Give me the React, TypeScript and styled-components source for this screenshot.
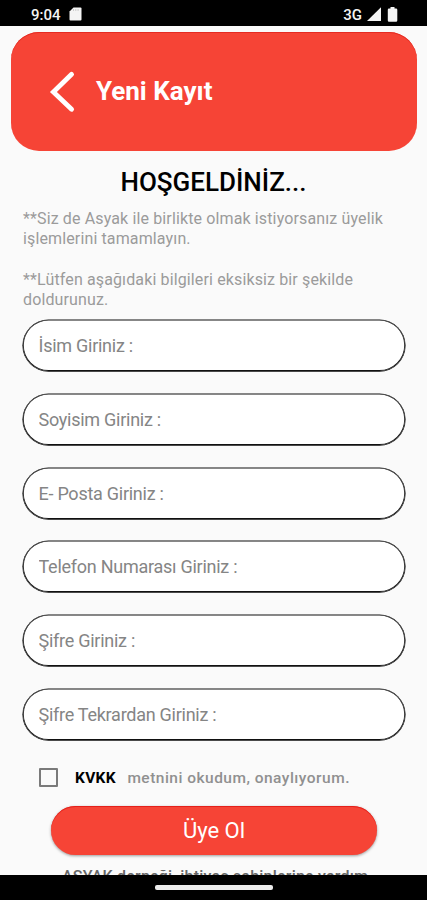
import React from "react";
import styled, { createGlobalStyle } from "styled-components";

const GlobalStyle = createGlobalStyle`
  *, *::before, *::after { box-sizing: border-box; }
  body { margin: 0; background: #fafafa; }
  #root { font-family: Roboto, "Noto Sans", sans-serif; }
`;

const Screen = styled.div`
  display: flex;
  flex-direction: column;
  width: 427px;
  height: 900px;
  overflow: hidden;
  background: #fafafa;
`;

const StatusBar = styled.div`
  display: flex;
  flex: none;
  align-items: center;
  height: 26px;
  padding: 3px 29px 0 31px;
  background: #000;
  color: #f4f4f4;
  font-size: 15px;
  font-weight: 500;
  line-height: 20px;
`;

const Clock = styled.span`
  width: 38px;
`;

const Network = styled.span`
  margin-left: auto;
  margin-right: 5px;
  font-size: 15px;
  line-height: 18px;
`;

const StatusIcon = styled.svg`
  display: block;
  flex: none;
`;

const Content = styled.main`
  display: flex;
  flex: 1;
  flex-direction: column;
  min-height: 0;
  overflow: hidden;
`;

const Header = styled.header`
  display: flex;
  flex: none;
  align-items: center;
  height: 119px;
  margin: 6px 10px 0 11.4px;
  padding-left: 37.6px;
  border-radius: 28px;
  background: #f64436;
  box-shadow: inset 0 1px 0 #e52b22;
  color: #fff;
`;

const BackButton = styled.button`
  display: block;
  padding: 0;
  border: 0;
  background: none;
  color: inherit;
`;

const Title = styled.h1`
  margin: 0 0 2px 19px;
  font-size: 26px;
  font-weight: 700;
  line-height: 30px;
`;

const Welcome = styled.h2`
  flex: none;
  margin: 16px 0 0;
  color: #000;
  font-size: 26px;
  font-weight: 500;
  line-height: 30px;
  text-align: center;
`;

const Notes = styled.div`
  display: flex;
  flex: none;
  flex-direction: column;
  gap: 22px;
  height: 111px;
  margin: 12px 23px 0;
`;

const Note = styled.p`
  margin: 0;
  color: #9b9b9b;
  font-size: 16px;
  line-height: 19.5px;
  letter-spacing: 0.13px;
`;

const Form = styled.form`
  display: flex;
  flex: none;
  flex-direction: column;
`;

const Fields = styled.div`
  display: flex;
  flex-direction: column;
  gap: 22.8px;
  padding: 0 22px 0 23px;
`;

const Field = styled.input`
  width: 100%;
  height: 51px;
  padding: 0 15.5px;
  border: 0;
  border-radius: 26px;
  outline: 0;
  background: #fff;
  box-shadow: 0 0.1px 0 0.6px #111, inset 0 -0.2px 0 0.75px #111;
  font: 400 18px/22px Roboto, "Noto Sans", sans-serif;
  letter-spacing: -0.26px;

  &::placeholder {
    color: #858585;
    opacity: 1;
  }
`;

const Consent = styled.label`
  display: flex;
  align-items: center;
  height: 24px;
  margin: 26px 0 0 39px;
  color: #909090;
  font-size: 15.5px;
  font-weight: 500;
  letter-spacing: 0.48px;
`;

const Checkbox = styled.input`
  appearance: none;
  width: 19px;
  height: 19px;
  margin: 0 17px 0 0;
  border: 2px solid #7a7a7a;
  border-radius: 1px;
  background: #fafafa;
`;

const ConsentLink = styled.strong`
  margin-right: 11.5px;
  color: #000;
  font-size: 15.5px;
  font-weight: 700;
  letter-spacing: 0.3px;
`;

const Submit = styled.button`
  height: 49px;
  margin: 16px 50px 0 51px;
  padding: 2px 0 0;
  border: 0;
  border-radius: 25px;
  background: #f64436;
  box-shadow: inset 0 1px 0 #e4201b, 0 1px 3px rgba(0, 0, 0, 0.38);
  color: #fff;
  font: 400 22px/26px Roboto, "Noto Sans", sans-serif;
`;

const Footnote = styled.p`
  flex: none;
  margin: 12px 0 0 62px;
  color: #666;
  font-size: 16px;
  font-weight: 500;
  line-height: 20px;
  letter-spacing: 0.2px;
  white-space: nowrap;
`;

const NavigationBar = styled.div`
  display: flex;
  flex: none;
  justify-content: center;
  height: 25px;
  padding-top: 10px;
  background: #000;
`;

const HomeHandle = styled.div`
  width: 118px;
  height: 5px;
  border-radius: 2px;
  background: #ececec;
`;

const fields = [
  { label: "İsim Giriniz :", type: "text" },
  { label: "Soyisim Giriniz :", type: "text" },
  { label: "E- Posta Giriniz :", type: "email" },
  { label: "Telefon Numarası Giriniz :", type: "tel" },
  { label: "Şifre Giriniz :", type: "password" },
  { label: "Şifre Tekrardan Giriniz :", type: "password" },
];

export default function App() {
  return (
    <Screen>
      <GlobalStyle />
      <StatusBar>
        <Clock>9:04</Clock>
        <StatusIcon width="13" height="15" viewBox="0 0 13 15">
          <path d="M4.5 .5H11.5Q12.5 .5 12.5 1.5V12.5Q12.5 13.5 11.5 13.5H1.5Q.5 13.5 .5 12.5V4.5Z" fill="#f4f4f4" />
          <path d="M4.5 2V4M6.8 2V4M9.1 2V4" stroke="#ccc" strokeWidth="1" />
        </StatusIcon>
        <Network>3G</Network>
        <StatusIcon width="14" height="15" viewBox="0 0 14 15">
          <path d="M0 14L14 .3V14Z" fill="#f4f4f4" />
        </StatusIcon>
        <StatusIcon width="17" height="16" viewBox="0 0 17 16">
          <path d="M9.5 0H13.5V1.5H15Q16.3 1.5 16.3 2.8V13.5Q16.3 14.8 15 14.8H8Q6.8 14.8 6.8 13.5V2.8Q6.8 1.5 8 1.5H9.5Z" fill="#f4f4f4" />
        </StatusIcon>
      </StatusBar>
      <Content>
        <Header>
          <BackButton type="button" aria-label="Geri">
            <StatusIcon width="28" height="44" viewBox="0 0 28 44">
              <path d="M22.6 4.3L4.4 22L22.6 39.3" fill="none" stroke="#fff" strokeWidth="4.8" strokeLinecap="round" strokeLinejoin="miter" />
            </StatusIcon>
          </BackButton>
          <Title>Yeni Kayıt</Title>
        </Header>
        <Welcome>HOŞGELDİNİZ...</Welcome>
        <Notes>
          <Note>
            **Siz de Asyak ile birlikte olmak istiyorsanız üyelik
            <br />
            işlemlerini tamamlayın.
          </Note>
          <Note>
            **Lütfen aşağıdaki bilgileri eksiksiz bir şekilde
            <br />
            doldurunuz.
          </Note>
        </Notes>
        <Form>
          <Fields>
            {fields.map(({ label, type }) => (
              <Field key={label} type={type} placeholder={label} aria-label={label} />
            ))}
          </Fields>
          <Consent>
            <Checkbox type="checkbox" />
            <ConsentLink>KVKK</ConsentLink>
            <span>metnini okudum, onaylıyorum.</span>
          </Consent>
          <Submit type="button">Üye Ol</Submit>
        </Form>
        <Footnote>ASYAK derneği, ihtiyaç sahiplerine yardım</Footnote>
      </Content>
      <NavigationBar>
        <HomeHandle />
      </NavigationBar>
    </Screen>
  );
}
